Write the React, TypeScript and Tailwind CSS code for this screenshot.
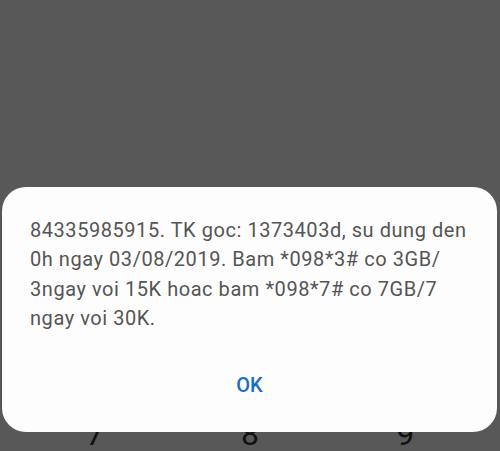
import React from "react";

export default function App() {
  const lines = [
    "84335985915. TK goc: 1373403d, su dung den",
    "0h ngay 03/08/2019. Bam *098*3# co 3GB/",
    "3ngay voi 15K hoac bam *098*7# co 7GB/7",
    "ngay voi 30K.",
  ];
  return (
    <div className="relative w-[500px] h-[451px] overflow-hidden bg-[#585858]" style={{ fontFamily: "Roboto, 'Noto Sans', sans-serif" }}>
      <div className="grid grid-cols-3 px-[17px] pt-[418px] text-[32px] leading-[32px] text-[#111] text-center">
        <span>7</span>
        <span>8</span>
        <span>9</span>
      </div>
      <div className="absolute top-[187px] left-[2px] right-[3px] h-[245px] rounded-[24px] bg-[#fdfdfd] pt-[29px] px-[28px] flex flex-col">
        <div className="text-[20px] leading-[29.3px] tracking-[0.55px] text-[#555555]">
          {lines.map((l) => (
            <div key={l} className="whitespace-nowrap">{l}</div>
          ))}
        </div>
        <div className="mt-[40px] flex justify-center">
          <span className="text-[20px] leading-[24px] font-medium text-[#1e6cc0]">OK</span>
        </div>
      </div>
    </div>
  );
}
